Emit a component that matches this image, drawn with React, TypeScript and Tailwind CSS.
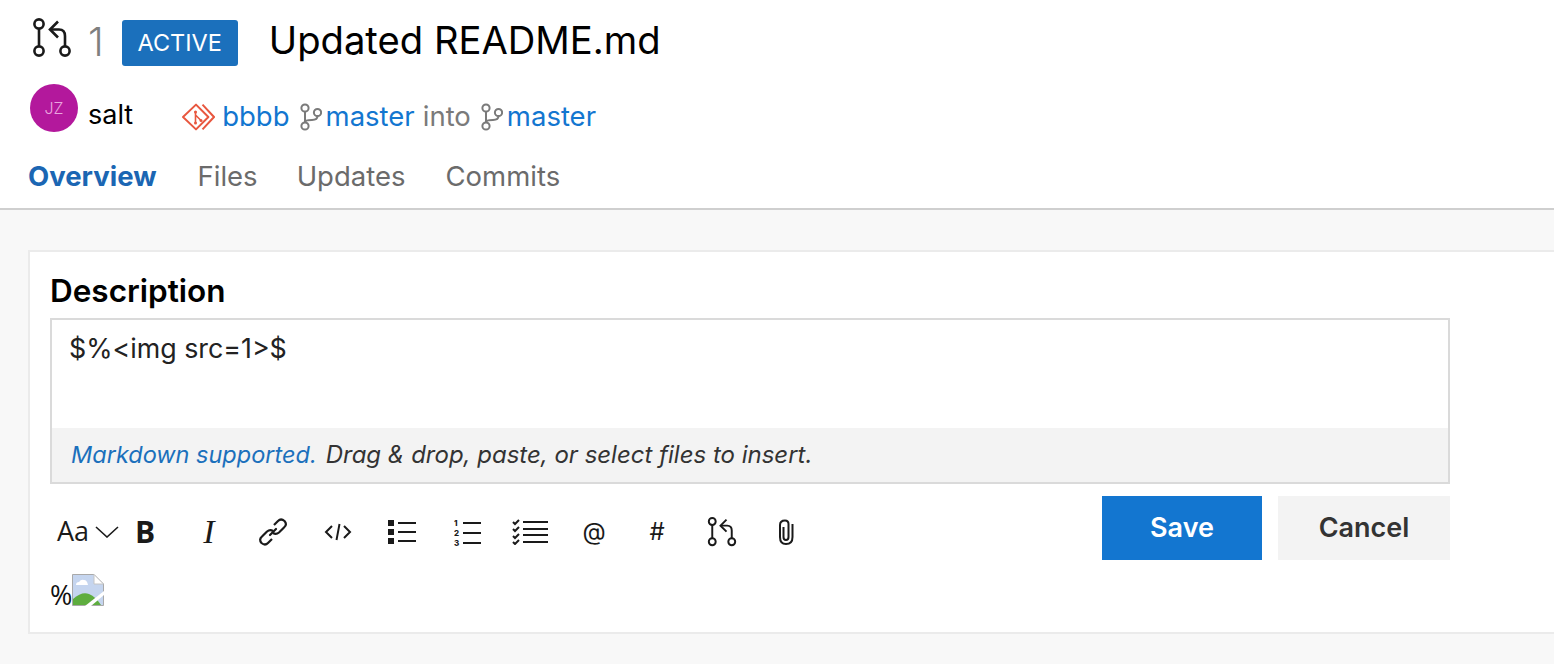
import type { ReactNode } from "react";

function PrIcon({ className }: { className: string }) {
  return (
    <svg viewBox="0 0 40 40" className={className} fill="none" stroke="currentColor" strokeWidth="2.6">
      <circle cx="7" cy="6" r="4.6" />
      <circle cx="7" cy="33" r="4.6" />
      <circle cx="33" cy="33" r="4.6" />
      <path d="M7 10.6V28.4" />
      <path d="M33 28.4V18Q33 11.5 27 11.5H18.5" />
      <path d="M26 3.5L18 11.5L26 19.5" />
    </svg>
  );
}

function BranchIcon() {
  return (
    <svg viewBox="0 0 22 28" className="h-[28px] w-[22px] shrink-0 text-[#7a7a7a]" fill="none" stroke="currentColor" strokeWidth="2">
      <circle cx="5" cy="5" r="3.6" />
      <circle cx="5" cy="23" r="3.6" />
      <circle cx="17.5" cy="9.5" r="3.6" />
      <path d="M5 8.6V19.4" />
      <path d="M17.5 13.1Q17.5 17 12 17Q5 17 5 19.4" />
    </svg>
  );
}

function GitLogo() {
  return (
    <svg viewBox="0 0 34 28" className="h-[28px] w-[34px]" fill="none" stroke="#e8573f" strokeWidth="2">
      <path d="M15 1.6L2 14L15 26.4L27.4 14Z" strokeLinejoin="round" />
      <path d="M21.5 1.6L33 14L21.5 26.4" />
      <path d="M14.5 8V20M14.5 12L20 17.5" strokeWidth="1.6" />
      <circle cx="14.5" cy="20" r="1.5" fill="#e8573f" stroke="none" />
      <circle cx="20" cy="17.5" r="1.5" fill="#e8573f" stroke="none" />
      <circle cx="14.5" cy="9" r="1.5" fill="#e8573f" stroke="none" />
    </svg>
  );
}

function Tool({ w, children }: { w: string; children: ReactNode }) {
  return <div className={`flex h-[32px] shrink-0 items-center justify-center ${w}`}>{children}</div>;
}

function BrokenImage() {
  return (
    <svg viewBox="0 0 32 32" className="h-[32px] w-[32px]">
      <path d="M0.5 0.5H22L31.5 10V31.5H0.5Z" fill="#c5d5ef" stroke="#a9a9a9" />
      <path d="M22 0.5V10H31.5Z" fill="#fff" stroke="#c4c4c4" />
      <path d="M4 11Q4 8 7 8Q9 5 12 6Q15 6 16 11Z" fill="#fff" />
      <path d="M1 31V25Q10 17 17 20Q24 23 29 31Z" fill="#5ead3f" />
      <path d="M13 32L32 17V21L19 32Z" fill="#fff" />
    </svg>
  );
}

export default function App() {
  return (
    <div className="flex h-[664px] w-[1554px] flex-col overflow-hidden bg-[#f8f8f8] font-['Inter',_'Liberation_Sans',_sans-serif]">
      <header className="h-[210px] shrink-0 border-b-2 border-[#cfcfcf] bg-white pl-[28px]">
        <div className="flex h-[80px] items-start">
          <PrIcon className="ml-[4px] mt-[18px] h-[40px] w-[40px] text-[#1a1a1a]" />
          <span className="ml-[16px] mt-[22px] text-[40px] font-light leading-none text-[#7f7f7f]">1</span>
          <span className="ml-[18px] mt-[20px] flex h-[46px] w-[116px] items-center justify-center rounded-[3px] bg-[#1b70bc] text-[23.5px] text-white">
            ACTIVE
          </span>
          <h1 className="ml-[31px] mt-[21px] text-[38.2px] leading-none text-black">Updated README.md</h1>
        </div>
        <div className="flex h-[56px] items-center">
          <div className="ml-[2px] flex h-[48px] w-[48px] items-center justify-center rounded-full bg-[#b3189c] text-[16px] font-light text-[#e9a6df]">
            JZ
          </div>
          <span className="ml-[10px] pt-[12px] text-[27px] leading-none text-black">salt</span>
          <div className="ml-[48px] flex items-center pt-[18px] text-[27.5px] text-[#1376d0]">
            <GitLogo />
            <span className="ml-[7px]">bbbb</span>
            <span className="ml-[10px]"><BranchIcon /></span>
            <span className="ml-[4px]">master</span>
            <span className="ml-[8px] text-[#7a7a7a]">into</span>
            <span className="ml-[10px]"><BranchIcon /></span>
            <span className="ml-[4px]">master</span>
          </div>
        </div>
        <nav className="flex h-[52px] items-center pt-[30px] text-[27.5px] text-[#6b6b6b]">
          <span className="font-bold text-[#1b66b3]">Overview</span>
          <span className="ml-[41px]">Files</span>
          <span className="ml-[39px]">Updates</span>
          <span className="ml-[40px]">Commits</span>
        </nav>
      </header>

      <main className="mt-[40px] ml-[28px] h-[384px] w-[1560px] border-2 border-[#ebebeb] bg-white pl-[20px]">
        <h2 className="flex h-[66px] items-center pt-[12px] text-[31.5px] font-semibold leading-none text-black">Description</h2>
        <div className="w-[1400px] border-2 border-[#dadada]">
          <div className="h-[108px] px-[17px] pt-[10px] text-[26.8px] leading-[36px] text-[#222]">$%&lt;img src=1&gt;$</div>
          <div className="flex h-[54px] items-center bg-[#f3f3f3] px-[19px] text-[24px] italic text-[#333]">
            <span className="text-[23.5px] text-[#1b70bc]">Markdown supported.</span>
            <span className="ml-[9px]">Drag &amp; drop, paste, or select files to insert.</span>
          </div>
        </div>
        <div className="mt-[12px] flex w-[1400px] items-start">
          <div className="mt-[20px] flex items-center text-[#1a1a1a]">
            <Tool w="ml-[7px] w-[32px]">
              <span className="-mt-[4px] font-['Open_Sans',_sans-serif] text-[27px] leading-none">Aa</span>
            </Tool>
            <Tool w="ml-[6px] w-[24px]">
              <svg viewBox="0 0 24 12" className="h-[12px] w-[24px]" fill="none" stroke="currentColor" strokeWidth="1.6">
                <path d="M1 1L12 11L23 1" />
              </svg>
            </Tool>
            <Tool w="ml-[15px] w-[22px]">
              <span className="font-['Open_Sans',_sans-serif] text-[30px] font-bold leading-none">B</span>
            </Tool>
            <Tool w="ml-[43px] w-[20px]">
              <span className="font-['Liberation_Serif',_serif] text-[34px] italic leading-none">I</span>
            </Tool>
            <Tool w="ml-[38px] w-[32px]">
              <svg viewBox="0 0 32 32" className="h-[32px] w-[32px]" fill="none" stroke="currentColor" strokeWidth="2.2">
                <path d="M13 19L19 13" strokeLinecap="round" />
                <path d="M17 9L21 5Q24 2 27.5 5Q30.5 8.5 27 11.5L22 16.5Q19 19 16 17" />
                <path d="M15 23L11 27Q8 30 4.5 27Q1.5 23.5 5 20.5L10 15.5Q13 13 16 15" />
              </svg>
            </Tool>
            <Tool w="ml-[35px] w-[28px]">
              <svg viewBox="0 0 28 20" className="h-[20px] w-[28px]" fill="none" stroke="currentColor" strokeWidth="2">
                <path d="M8 4L2 10L8 16" />
                <path d="M20 4L26 10L20 16" />
                <path d="M15.5 2L12.5 18" />
              </svg>
            </Tool>
            <Tool w="ml-[36px] w-[28px]">
              <svg viewBox="0 0 28 24" className="h-[24px] w-[28px]" fill="currentColor">
                <rect x="0" y="0" width="6" height="6" />
                <rect x="0" y="9" width="6" height="6" />
                <rect x="0" y="18" width="6" height="6" />
                <rect x="10" y="2" width="18" height="2" />
                <rect x="10" y="11" width="18" height="2" />
                <rect x="10" y="20" width="18" height="2" />
              </svg>
            </Tool>
            <Tool w="ml-[38px] w-[28px]">
              <svg viewBox="0 0 28 32" className="h-[32px] w-[28px]">
                <text x="0" y="10" fontSize="8" fontWeight="800" fontFamily="Inter" fill="currentColor">1</text>
                <text x="0" y="20" fontSize="8" fontWeight="800" fontFamily="Inter" fill="currentColor">2</text>
                <text x="0" y="30" fontSize="8" fontWeight="800" fontFamily="Inter" fill="currentColor">3</text>
                <path d="M9 7H27M9 17H27M9 27H27" stroke="currentColor" strokeWidth="2" />
              </svg>
            </Tool>
            <Tool w="ml-[30px] w-[36px]">
              <svg viewBox="0 0 36 26" className="h-[26px] w-[36px]" fill="none" stroke="currentColor" strokeWidth="2">
                <path d="M1 3L3 5L7 1M1 10L3 12L7 8M1 17L3 19L7 15M1 23L3 25L7 21" />
                <path d="M11 3H36M11 10H36M11 16H36M11 23H36" />
              </svg>
            </Tool>
            <Tool w="ml-[34px] w-[24px]">
              <span className="text-[24px] leading-none">@</span>
            </Tool>
            <Tool w="ml-[43px] w-[16px]">
              <span className="text-[24px] leading-none">#</span>
            </Tool>
            <Tool w="ml-[42px] w-[30px]">
              <PrIcon className="h-[30px] w-[30px]" />
            </Tool>
            <Tool w="ml-[41px] w-[16px]">
              <svg viewBox="0 0 16 26" className="h-[26px] w-[16px]" fill="none" stroke="currentColor" strokeWidth="2">
                <path d="M5.5 8V18Q5.5 21 8 21Q10.5 21 10.5 18V5Q10.5 1.5 7 1.5Q2 1.5 2 6V18Q2 25 8 25Q14.5 25 14.5 18V5" />
              </svg>
            </Tool>
          </div>
          <button type="button" className="ml-auto h-[64px] w-[160px] bg-[#1376d0] pt-[1px] text-[27px] font-semibold text-white">
            Save
          </button>
          <button type="button" className="ml-[16px] h-[64px] w-[172px] bg-[#f3f3f3] pt-[1px] text-[27px] font-semibold text-[#333]">
            Cancel
          </button>
        </div>
        <div className="mt-[14px] flex items-end">
          <span className="font-['Open_Sans',_sans-serif] text-[27px] leading-[22px] text-[#111]">%</span>
          <BrokenImage />
        </div>
      </main>
    </div>
  );
}
